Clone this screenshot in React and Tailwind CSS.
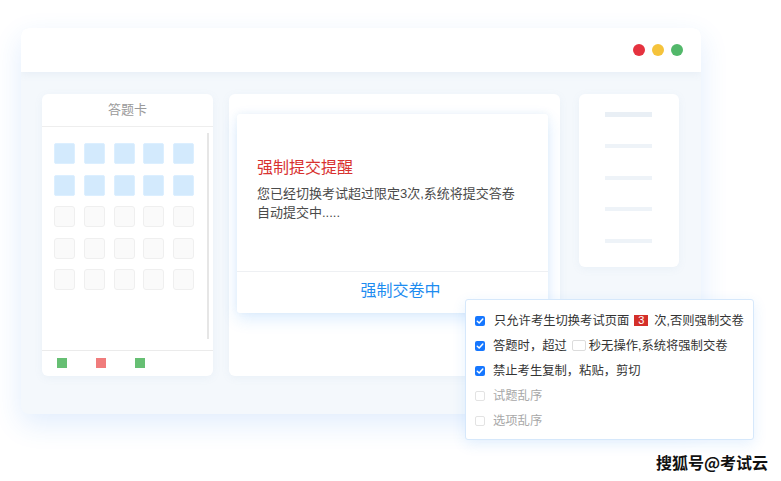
import React from "react";

const FONT = "font-['Liberation_Sans','Noto_Sans_CJK_SC',sans-serif]";

function Check({ checked }) {
  if (checked) {
    return (
      <span className="w-[10px] h-[10px] rounded-[2px] bg-[#1677ff] flex items-center justify-center shrink-0">
        <svg width="8" height="8" viewBox="0 0 8 8">
          <path d="M1.3 4.2 L3.2 6 L6.8 2" fill="none" stroke="#fff" strokeWidth="1.5" strokeLinecap="round" strokeLinejoin="round" />
        </svg>
      </span>
    );
  }
  return <span className="w-[10px] h-[10px] rounded-[2px] border border-[#e3e3e3] bg-white shrink-0" />;
}

function Row({ checked, children }) {
  return (
    <div className="h-[25px] flex items-center">
      <Check checked={checked} />
      <div className={`ml-[8px] flex items-center text-[12.3px] leading-[16px] ${checked ? "text-[#333]" : "text-[#a8a8a8]"}`}>
        {children}
      </div>
    </div>
  );
}

export default function App() {
  const blue = Array.from({ length: 10 });
  const gray = Array.from({ length: 15 });
  return (
    <div className={`relative w-[781px] h-[481px] bg-white overflow-hidden ${FONT}`}>
      <div className="pt-[28px] pl-[21px]">
        {/* window */}
        <div className="w-[680px] h-[386px] rounded-[8px] bg-[#f4f8fc] shadow-[0_10px_28px_rgba(40,130,240,0.14)] flex flex-col overflow-hidden">
          <div className="h-[44px] bg-white shadow-[0_2px_8px_rgba(120,150,190,0.10)] flex items-center justify-end pr-[18px] gap-[7px] relative z-10">
            <span className="w-[12px] h-[12px] rounded-full bg-[#e5323f]" />
            <span className="w-[12px] h-[12px] rounded-full bg-[#f5c33b]" />
            <span className="w-[12px] h-[12px] rounded-full bg-[#52b86a]" />
          </div>
          <div className="flex items-start pt-[22px] pl-[21px]">
            {/* left card */}
            <div className="w-[171px] h-[282px] bg-white rounded-[6px] shadow-[0_2px_8px_rgba(120,150,190,0.08)] flex flex-col">
              <div className="h-[33px] border-b border-[#eeeeee] flex items-center justify-center text-[13px] text-[#9a9a9a]">
                答题卡
              </div>
              <div className="flex-1 relative flex">
                <div className="pl-[12px] pt-[16px]">
                  <div className="grid grid-cols-5 gap-x-[8.75px] gap-y-[10.6px]">
                    {blue.map((_, i) => (
                      <span key={"b" + i} className="w-[21px] h-[21px] rounded-[2px] bg-[#d3eafd] border border-[#dcefff]" />
                    ))}
                    {gray.map((_, i) => (
                      <span key={"g" + i} className="w-[21px] h-[21px] rounded-[3px] bg-[#fafafa] border border-[#efefef]" />
                    ))}
                  </div>
                </div>
                <div className="ml-auto mr-[4.5px] mt-[6px] mb-[11px] w-[2px] bg-[#e6e6e6]" />
              </div>
              <div className="h-[26px] border-t border-[#ebebeb] flex items-center pl-[15px] gap-[29px] pb-[1px]">
                <span className="w-[10px] h-[10px] bg-[#66bf73]" />
                <span className="w-[10px] h-[10px] bg-[#f07c7c]" />
                <span className="w-[10px] h-[10px] bg-[#66bf73]" />
              </div>
            </div>
            {/* middle card */}
            <div className="ml-[16px] w-[331px] h-[282px] bg-white rounded-[6px] shadow-[0_2px_8px_rgba(120,150,190,0.08)] pt-[20px] pl-[8px]">
              <div className="w-[311px] h-[199px] bg-white rounded-[3px] shadow-[0_6px_16px_rgba(40,140,250,0.16),0_-1px_6px_rgba(120,150,190,0.08)] flex flex-col">
                <div className="h-[158px] border-b border-[#eef0f3] pl-[20px] pt-[44px]">
                  <div className="text-[16px] leading-[20px] text-[#d8312f]">强制提交提醒</div>
                  <div className="mt-[6px] text-[13px] leading-[19px] text-[#4a4a4a]">
                    您已经切换考试超过限定3次,系统将提交答卷
                    <br />
                    自动提交中.....
                  </div>
                </div>
                <div className="flex-1 flex items-center justify-center pl-[16px] pb-[3px] text-[16px] text-[#1d8cf0]">
                  强制交卷中
                </div>
              </div>
            </div>
            {/* right card */}
            <div className="ml-[19px] w-[100px] h-[173px] bg-white rounded-[6px] shadow-[0_2px_8px_rgba(120,150,190,0.08)] pt-[18px] pl-[26px] flex flex-col gap-[27.5px]">
              <span className="w-[47px] h-[4.5px] bg-[#e9eff5]" />
              <span className="w-[47px] h-[4px] bg-[#eef3f8]" />
              <span className="w-[47px] h-[4px] bg-[#eef3f8]" />
              <span className="w-[47px] h-[4px] bg-[#eef3f8]" />
              <span className="w-[47px] h-[4px] bg-[#eef3f8]" />
            </div>
          </div>
        </div>
      </div>

      {/* settings panel */}
      <div className="absolute left-[465px] top-[299px] w-[289px] h-[141px] bg-white border border-[#d6e8fb] rounded-[3px] shadow-[0_4px_14px_rgba(40,140,250,0.12)] pt-[8px] pl-[9px]">
        <Row checked>
          <span className="ml-[1px]">只允许考生切换考试页面</span>
          <span className="ml-[5px] w-[14px] h-[11px] bg-[#d42f2a] text-white text-[11px] leading-[11px] flex items-center justify-center">3</span>
          <span className="ml-[6px]">次,否则强制交卷</span>
        </Row>
        <Row checked>
          <span>答题时，超过</span>
          <span className="ml-[5px] w-[14px] h-[11px] border border-[#dcdcdc] rounded-[2px] bg-white" />
          <span className="ml-[3px]">秒无操作,系统将强制交卷</span>
        </Row>
        <Row checked>
          <span>禁止考生复制，粘贴，剪切</span>
        </Row>
        <Row>
          <span>试题乱序</span>
        </Row>
        <Row>
          <span>选项乱序</span>
        </Row>
      </div>

      {/* watermark */}
      <div className="absolute left-[656px] top-[451px] text-[16px] leading-[22px] font-bold text-[#111] font-['Noto_Sans_CJK_SC',sans-serif] [text-shadow:0_0_2px_#fff,0_0_2px_#fff,1px_1px_1px_#fff,-1px_-1px_1px_#fff]">
        搜狐号@考试云
      </div>
    </div>
  );
}
